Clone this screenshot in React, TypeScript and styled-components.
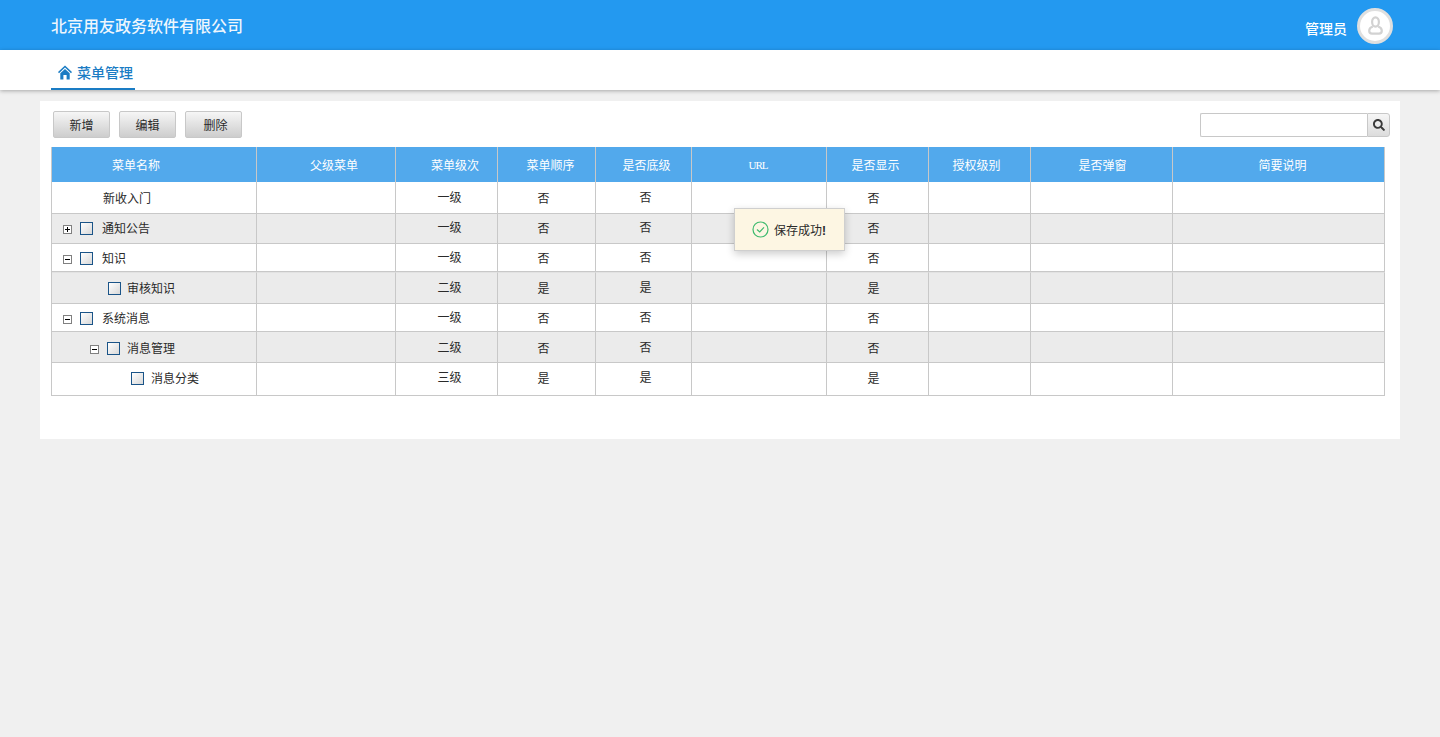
import * as React from "react"
import styled, { createGlobalStyle } from "styled-components"
import { FaSearch } from "react-icons/fa"

const GlobalStyle = createGlobalStyle`
  html, body {
    margin: 0;
    padding: 0;
    background: #f0f0f0;
    font-family: "Liberation Sans", "Noto Sans CJK SC", sans-serif;
    font-size: 12px;
  }
`

const Page = styled.div`
  position: relative;
  height: 737px;
  overflow: hidden;
`

const Header = styled.div`
  height: 50px;
  background: #2399f0;
  display: flex;
  align-items: center;
  justify-content: space-between;
  padding: 0 47px 0 51px;
  color: #fff;
`

const Brand = styled.div`
  font-size: 16px;
  font-weight: 500;
  color: #eef6fd;
`

const User = styled.div`
  display: flex;
  align-items: center;
  gap: 10px;
  font-size: 14px;
  font-weight: 500;
  margin-top: 1px;
`

const UserName = styled.span`
  margin-top: 4px;
`

const Avatar = styled.div`
  width: 36px;
  height: 36px;
  box-sizing: border-box;
  border-radius: 50%;
  background: #fff;
  border: 3px solid #dfdfdf;
  display: flex;
  align-items: center;
  justify-content: center;
`

const Nav = styled.div`
  height: 40px;
  background: #fff;
  box-shadow: 0 1px 4px rgba(0, 0, 0, 0.3);
  padding-left: 51px;
  box-sizing: border-box;
  position: relative;
`

const Tab = styled.div`
  display: inline-flex;
  align-items: center;
  gap: 5px;
  box-sizing: border-box;
  width: 84px;
  height: 40px;
  padding: 6px 0 0 7px;
  border-bottom: 2px solid #1a7cc4;
  color: #1a7cc4;
  font-size: 14px;
  font-weight: 500;
`

const Panel = styled.div`
  position: relative;
  margin: 11px 40px 0;
  height: 338px;
  background: #fff;
`

const Toolbar = styled.div`
  display: flex;
  align-items: flex-start;
  justify-content: space-between;
  height: 46px;
  padding: 10px 10px 0 13px;
  box-sizing: border-box;
`

const Buttons = styled.div`
  display: flex;
  gap: 9px;
`

const ToolButton = styled.button<{ $shift?: number }>`
  width: 57px;
  height: 27px;
  padding: 0 0 0 ${p => p.$shift ?? 0}px;
  border: 1px solid #c8c8c8;
  border-radius: 2px;
  background: linear-gradient(#f6f6f6, #cdcdcd);
  color: #2a2a2a;
  font: inherit;
`

const Search = styled.div`
  display: flex;
  margin-top: 2px;
`

const SearchInput = styled.input`
  width: 167px;
  height: 24px;
  box-sizing: border-box;
  border: 1px solid #c8c8c8;
  border-right: 0;
  border-radius: 2px 0 0 2px;
  padding: 0 4px;
  outline: none;
`

const SearchButton = styled.button`
  width: 23px;
  height: 24px;
  padding: 0;
  border: 1px solid #c8c8c8;
  border-radius: 0 3px 3px 0;
  background: linear-gradient(#f6f6f6, #dcdcdc);
  color: #3a3a3a;
  display: flex;
  align-items: center;
  justify-content: center;
`

const Table = styled.table`
  margin-left: 11px;
  width: 1334px;
  table-layout: fixed;
  border-collapse: separate;
  border-spacing: 0;
  border-left: 1px solid #c8c8c8;
`

const Th = styled.th<{ $left?: number; $right?: number }>`
  height: 35px;
  padding: 0 ${p => p.$right ?? 0}px 0 ${p => p.$left ?? 0}px;
  box-sizing: border-box;
  background: #52a9ec;
  color: #fff;
  font-weight: normal;
  text-align: center;
  border-right: 1px solid #c8c8c8;
`

const UrlHead = styled(Th)`
  font-family: "Liberation Serif", serif;
  font-size: 11px;
  letter-spacing: -1px;
`

const Row = styled.tr<{ $h: number; $alt?: boolean; $seam?: boolean }>`
  height: ${p => p.$h}px;
  background: ${p => (p.$alt ? "#ebebeb" : "#fff")};

  td {
    ${p => (p.$seam ? "border-top: 1px solid #e2e2e2;" : "")}
  }
`

const Td = styled.td<{ $top: number; $left?: number; $right?: number }>`
  padding: ${p => p.$top}px ${p => p.$right ?? 0}px 0 ${p => p.$left ?? 0}px;
  box-sizing: border-box;
  vertical-align: top;
  line-height: 18px;
  text-align: center;
  color: #2a2a2a;
  border-right: 1px solid #c8c8c8;
  border-bottom: 1px solid #c8c8c8;
`

const Tree = styled.div<{ $indent: number }>`
  display: flex;
  align-items: center;
  padding-left: ${p => p.$indent}px;
`

const Expander = styled.span`
  width: 9px;
  height: 9px;
  box-sizing: border-box;
  border: 1px solid #808080;
  background: #fff;
  position: relative;
  margin-right: 8px;

  &::before {
    content: "";
    position: absolute;
    left: 1px;
    right: 1px;
    top: 3px;
    height: 1px;
    background: #000;
  }
`

const ExpanderPlus = styled(Expander)`
  &::after {
    content: "";
    position: absolute;
    top: 1px;
    bottom: 1px;
    left: 3px;
    width: 1px;
    background: #000;
  }
`

const Check = styled.span<{ $gap: number }>`
  width: 13px;
  height: 13px;
  box-sizing: border-box;
  margin: -2px ${p => p.$gap}px 0 0;
  border: 1px solid #1a5488;
  background: linear-gradient(135deg, #fff, #d8d8d8);
`

const Toast = styled.div`
  position: absolute;
  left: 694px;
  top: 107px;
  width: 111px;
  height: 43px;
  box-sizing: border-box;
  background: #fdf6e3;
  border: 1px solid #cfcfcf;
  box-shadow: 0 3px 8px rgba(0, 0, 0, 0.2);
  display: flex;
  align-items: center;
  gap: 5px;
  padding-left: 17px;
  color: #2a2a2a;
`

const Bang = styled.b`
  font-weight: 700;
`

const widths = [205, 139, 102, 98, 96, 135, 102, 102, 142, 212]

type Item = {
  name: string
  h: number
  top: number
  level: string
  flag: string
  toggle?: "plus" | "minus"
  gap?: number
  indent: number
  seam?: boolean
}

const rows: Item[] = [
  { name: "新收入门", h: 32, top: 8, level: "一级", flag: "否", indent: 51 },
  { name: "通知公告", h: 30, top: 6, level: "一级", flag: "否", toggle: "plus", gap: 9, indent: 11 },
  { name: "知识", h: 28, top: 6, level: "一级", flag: "否", toggle: "minus", gap: 9, indent: 11 },
  { name: "审核知识", h: 32, top: 7, level: "二级", flag: "是", gap: 6, indent: 56, seam: true },
  { name: "系统消息", h: 28, top: 6, level: "一级", flag: "否", toggle: "minus", gap: 9, indent: 11 },
  { name: "消息管理", h: 31, top: 8, level: "二级", flag: "否", toggle: "minus", gap: 7, indent: 38 },
  { name: "消息分类", h: 33, top: 7, level: "三级", flag: "是", gap: 7, indent: 79 },
]

const HomeIcon = () => (
  <svg width="14" height="15" viewBox="0 0 14 15" fill="currentColor">
    <path d="M7 0.5 L0 7 L1 8.2 L7 2.6 L13 8.2 L14 7 Z" />
    <path d="M2.3 8.2 L7 3.9 L11.7 8.2 V14.5 H8.6 V10 H5.4 V14.5 H2.3 Z" />
  </svg>
)

const AvatarIcon = () => (
  <svg width="15" height="19" viewBox="0 0 15 19" fill="none" stroke="#d2d2d2" strokeWidth="2.2">
    <ellipse cx="7.5" cy="6" rx="3.4" ry="4.6" />
    <path d="M4.8 10.5 C2 11.5 1.2 13 1.2 14.8 C1.2 16.6 2.4 17.6 4 17.6 H11 C12.6 17.6 13.8 16.6 13.8 14.8 C13.8 13 13 11.5 10.2 10.5" />
  </svg>
)

const SuccessIcon = () => (
  <svg width="17" height="17" viewBox="0 0 17 17" fill="none" stroke="#3dba6e" strokeWidth="1.2">
    <circle cx="8.5" cy="8.5" r="7.5" />
    <path d="M5 8.5 L7.7 11 L12 6.3" />
  </svg>
)

export default function App() {
  return (
    <Page>
      <GlobalStyle />
      <Header>
        <Brand>北京用友政务软件有限公司</Brand>
        <User>
          <UserName>管理员</UserName>
          <Avatar>
            <AvatarIcon />
          </Avatar>
        </User>
      </Header>
      <Nav>
        <Tab>
          <HomeIcon />
          菜单管理
        </Tab>
      </Nav>
      <Panel>
        <Toolbar>
          <Buttons>
            <ToolButton>新增</ToolButton>
            <ToolButton>编辑</ToolButton>
            <ToolButton $shift={4}>删除</ToolButton>
          </Buttons>
          <Search>
            <SearchInput />
            <SearchButton>
              <FaSearch size={12} />
            </SearchButton>
          </Search>
        </Toolbar>
        <Table>
          <colgroup>
            {widths.map((w, i) => (
              <col key={i} style={{ width: w }} />
            ))}
          </colgroup>
          <thead>
            <tr>
              <Th $right={36}>菜单名称</Th>
              <Th $left={16}>父级菜单</Th>
              <Th $left={17}>菜单级次</Th>
              <Th $left={8}>菜单顺序</Th>
              <Th $left={6}>是否底级</Th>
              <UrlHead $right={2}>URL</UrlHead>
              <Th $right={4}>是否显示</Th>
              <Th $right={6}>授权级别</Th>
              <Th $left={2}>是否弹窗</Th>
              <Th $left={8}>简要说明</Th>
            </tr>
          </thead>
          <tbody>
            {rows.map((r, i) => (
              <Row key={r.name} $h={r.h} $alt={i % 2 === 1} $seam={r.seam}>
                <Td $top={r.top}>
                  <Tree $indent={r.indent}>
                    {r.toggle === "plus" && <ExpanderPlus />}
                    {r.toggle === "minus" && <Expander />}
                    {r.gap !== undefined && <Check $gap={r.gap} />}
                    <span>{r.name}</span>
                  </Tree>
                </Td>
                <Td $top={r.top} />
                <Td $top={r.top - 1} $left={6}>{r.level}</Td>
                <Td $top={r.top} $right={6}>{r.flag}</Td>
                <Td $top={r.top - 1} $left={4}>{r.flag}</Td>
                <Td $top={r.top} />
                <Td $top={r.top} $right={8}>{r.flag}</Td>
                <Td $top={r.top} />
                <Td $top={r.top} />
                <Td $top={r.top} />
              </Row>
            ))}
          </tbody>
        </Table>
        <Toast>
          <SuccessIcon />
          <span>
            保存成功<Bang>!</Bang>
          </span>
        </Toast>
      </Panel>
    </Page>
  )
}
